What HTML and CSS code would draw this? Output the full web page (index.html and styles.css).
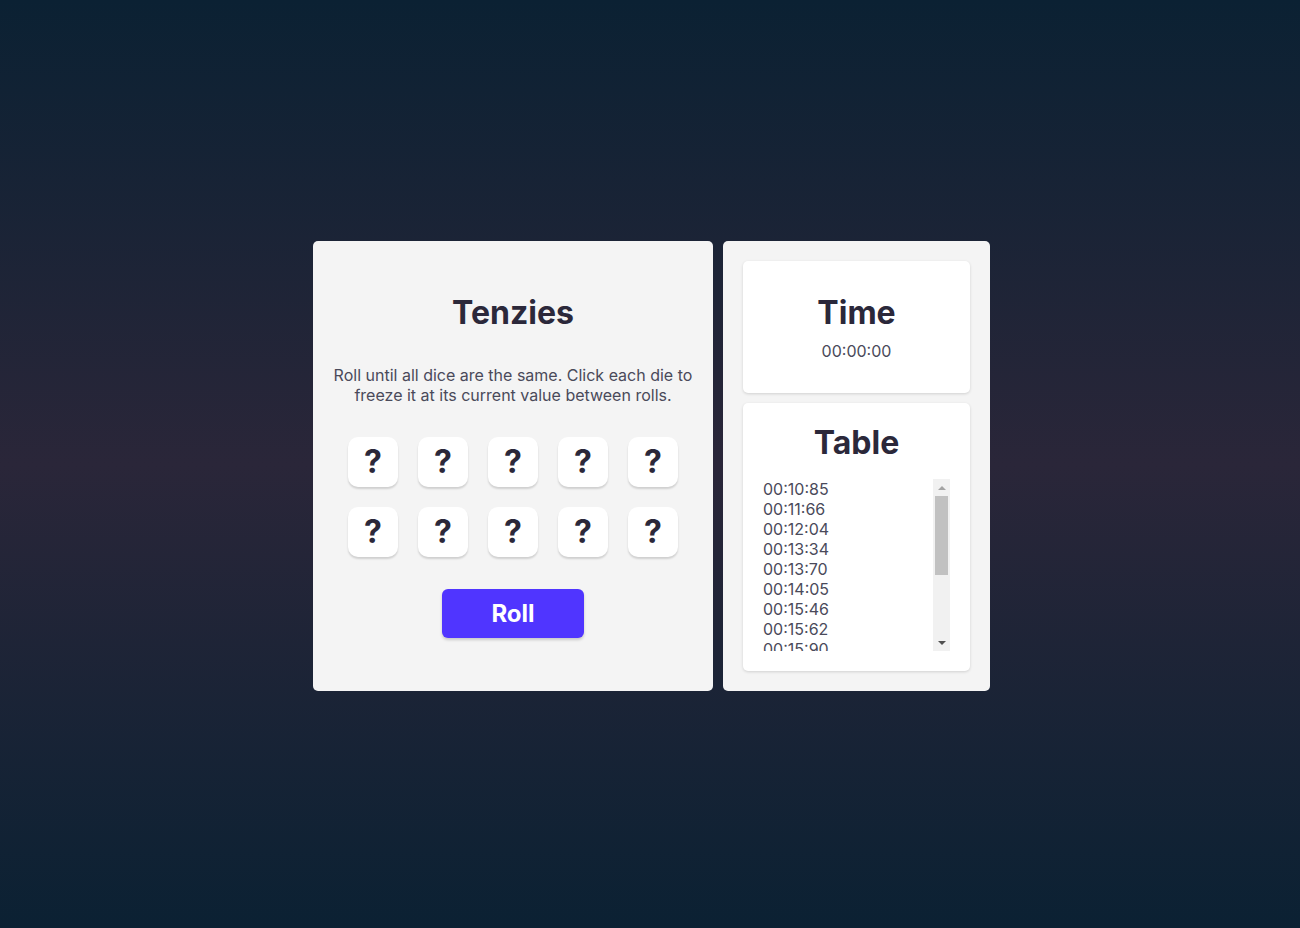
FILE: index.html
```html
<!DOCTYPE html>
<html lang="en">
<head>
<meta charset="utf-8">
<title>Tenzies</title>
<link rel="stylesheet" href="styles.css">
</head>
<body>
<main class="app">
  <section class="game card">
    <h1 class="title">Tenzies</h1>
    <p class="instructions">Roll until all dice are the same. Click each die to freeze it at its current value between rolls.</p>
    <div class="dice">
      <div class="die">?</div><div class="die">?</div><div class="die">?</div><div class="die">?</div><div class="die">?</div>
      <div class="die">?</div><div class="die">?</div><div class="die">?</div><div class="die">?</div><div class="die">?</div>
    </div>
    <button class="roll">Roll</button>
  </section>
  <aside class="side card">
    <div class="panel time-panel">
      <h2 class="title">Time</h2>
      <div class="time">00:00:00</div>
    </div>
    <div class="panel table-panel">
      <h2 class="title">Table</h2>
      <div class="scorebox">
        <ul class="scores">
          <li>00:10:85</li>
          <li>00:11:66</li>
          <li>00:12:04</li>
          <li>00:13:34</li>
          <li>00:13:70</li>
          <li>00:14:05</li>
          <li>00:15:46</li>
          <li>00:15:62</li>
          <li>00:15:90</li>
          <li>00:16:12</li>
          <li>00:16:58</li>
          <li>00:17:03</li>
          <li>00:17:41</li>
          <li>00:18:27</li>
          <li>00:19:05</li>
        </ul>
        <div class="scrollbar" aria-hidden="true">
          <span class="sb-btn"><span class="arrow up"></span></span>
          <div class="track"><div class="thumb"></div></div>
          <span class="sb-btn"><span class="arrow down"></span></span>
        </div>
      </div>
    </div>
  </aside>
</main>
</body>
</html>
```
FILE: styles.css
```css
* { box-sizing: border-box; }
html, body { height: 100%; }
body {
  margin: 0;
  font-family: Inter, "Noto Sans", sans-serif;
  color: #2b283a;
  background: linear-gradient(180deg, #0b2133 0%, #2a2639 50%, #0b2133 100%);
  display: flex;
  align-items: center;
  justify-content: center;
}
.app {
  display: flex;
  gap: 10px;
  margin-left: 3px;
  margin-top: 4px;
}
.card {
  background: #f4f4f4;
  border-radius: 5px;
  height: 450px;
}
.game {
  width: 400px;
  padding: 0 20px 2px;
  display: flex;
  flex-direction: column;
  align-items: center;
  justify-content: center;
}
.title {
  margin: 0;
  font-size: 32px;
  font-weight: 700;
  line-height: 39px;
  color: #2b283a;
}
.instructions {
  margin: 33px 0 0;
  font-size: 16px;
  line-height: 20px;
  text-align: center;
  color: #4a4a5a;
}
.dice {
  margin-top: 32px;
  display: grid;
  grid-template-columns: repeat(5, 50px);
  grid-auto-rows: 50px;
  gap: 20px;
}
.die {
  background: #fff;
  border-radius: 10px;
  box-shadow: 0 2px 2px rgba(0, 0, 0, 0.15);
  display: flex;
  align-items: center;
  justify-content: center;
  font-size: 32px;
  font-weight: 700;
  color: #2b283a;
}
.roll {
  margin-top: 32px;
  width: 142px;
  height: 49px;
  border: none;
  border-radius: 6px;
  background: #5035ff;
  color: #fff;
  font-family: Inter, "Noto Sans", sans-serif;
  font-size: 24px;
  font-weight: 700;
  box-shadow: 0 2px 3px rgba(0, 0, 0, 0.18);
  cursor: pointer;
}
.side {
  width: 267px;
  padding: 20px;
  display: flex;
  flex-direction: column;
  gap: 10px;
}
.panel {
  background: #fff;
  border-radius: 5px;
  box-shadow: 0 1px 3px rgba(0, 0, 0, 0.15);
}
.time-panel {
  height: 132px;
  display: flex;
  flex-direction: column;
  align-items: center;
  justify-content: center;
  gap: 9px;
}
.time {
  font-size: 16px;
  line-height: 20px;
  color: #4a4a5a;
}
.table-panel {
  flex: 1;
  padding: 20px;
  display: flex;
  flex-direction: column;
  align-items: center;
}
.scorebox {
  margin-top: 17px;
  width: 100%;
  height: 172px;
  display: flex;
}
.scores {
  flex: 1;
  list-style: none;
  margin: 0;
  padding: 0;
  overflow: hidden;
  font-size: 16px;
  line-height: 20px;
  color: #4a4a5a;
}
.scrollbar {
  width: 17px;
  background: #f1f1f1;
  display: flex;
  flex-direction: column;
}
.sb-btn {
  height: 17px;
  display: flex;
  align-items: center;
  justify-content: center;
}
.arrow {
  width: 0;
  height: 0;
  border-left: 4px solid transparent;
  border-right: 4px solid transparent;
}
.arrow.up {
  border-bottom: 4px solid #a3a3a3;
}
.arrow.down {
  border-top: 4px solid #505050;
}
.track {
  flex: 1;
  padding: 0 2px;
}
.thumb {
  height: 79px;
  background: #c1c1c1;
}
```
